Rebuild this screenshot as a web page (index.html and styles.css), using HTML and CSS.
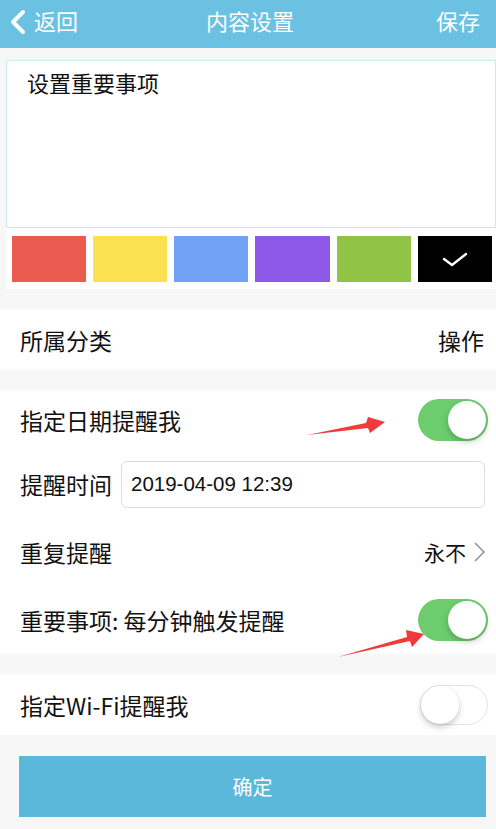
FILE: index.html
```html
<!DOCTYPE html>
<html lang="zh-CN">
<head>
  <meta charset="UTF-8" />
  <title>内容设置</title>
  <link rel="stylesheet" href="styles.css">
</head>
<body>
  <header class="topbar">
    <div class="back">
      <svg class="back-icon" width="20" height="26" viewBox="0 0 20 26">
        <path d="M15 3 L5 13 L15 23" fill="none" stroke="#fff" stroke-width="4" stroke-linecap="round" stroke-linejoin="round" />
      </svg>
      <span>返回</span>
    </div>
    <div class="title">内容设置</div>
    <div class="save">保存</div>
  </header>

  <div class="editor">
    <div class="note">设置重要事项</div>
    <div class="swatches">
      <div class="swatch red"></div>
      <div class="swatch yellow"></div>
      <div class="swatch blue"></div>
      <div class="swatch purple"></div>
      <div class="swatch green"></div>
      <div class="swatch black">
        <svg width="28" height="20" viewBox="0 0 28 20">
          <path d="M3 10 L11 16 L25 5" fill="none" stroke="#fff" stroke-width="2.4" stroke-linecap="round" stroke-linejoin="round" />
        </svg>
      </div>
    </div>
  </div>

  <!-- 分类 -->
  <div class="group">
    <div class="row">
      <span>所属分类</span>
      <span class="value">操作</span>
    </div>
  </div>

  <!-- 日期提醒 -->
  <div class="group">
    <div class="row first">
      <span>指定日期提醒我</span>
      <div class="toggle on"><div class="knob"></div></div>
    </div>
    <div class="row tall">
      <span>提醒时间</span>
      <div class="time-box">2019-04-09 12:39</div>
    </div>
    <div class="row tall">
      <span>重复提醒</span>
      <span class="value small">永不
        <svg class="chev" width="14" height="22" viewBox="0 0 14 22">
          <path d="M3 2 L12 11 L3 20" fill="none" stroke="#888" stroke-width="1.4" />
        </svg>
      </span>
    </div>
    <div class="row tall">
      <span>重要事项: 每分钟触发提醒</span>
      <div class="toggle on"><div class="knob"></div></div>
    </div>
  </div>

  <!-- Wi-Fi提醒 -->
  <div class="group">
    <div class="row">
      <span>指定Wi-Fi提醒我</span>
      <div class="toggle"><div class="knob"></div></div>
    </div>
  </div>

  <button class="confirm">确定</button>

  <svg class="marks" width="496" height="829" viewBox="0 0 496 829">
    <polygon points="307,435 366,423 368,417 385,422 370,433 368,428" fill="#f23a3a" />
    <polygon points="338,657 407,637 406,630 424,634 412,647 410,641" fill="#f23a3a" />
  </svg>
</body>
</html>
```

FILE: styles.css
```css
body {
  margin: 0;
  width: 496px;
  min-height: 829px;
  background: #f7f7f7;
  font-family: "Noto Sans CJK SC", "Noto Sans", sans-serif;
  color: #111;
  position: relative;
  overflow: hidden;
}

.topbar {
  height: 48px;
  box-sizing: border-box;
  background: #6bc1e1;
  color: #fff;
  font-size: 22px;
  display: grid;
  grid-template-columns: 1fr auto 1fr;
  align-items: center;
  padding: 0 16px 9px 8px;
}

.back {
  display: flex;
  align-items: center;
  gap: 6px;
}

.back-icon {
  position: relative;
  top: 2px;
}

.title {
  text-align: center;
  padding-left: 12px;
}

.save {
  text-align: right;
}

.editor {
  margin: 12px 0 20px 6px;
  background: #fff;
}

.note {
  height: 161px;
  border: 1px solid #cbe7f1;
  padding: 5px 20px 0;
  font-size: 22px;
}

.swatches {
  display: grid;
  grid-template-columns: repeat(6, 1fr);
  gap: 7px;
  padding: 8px 4px 7px 6px;
}

.swatch {
  height: 46px;
  display: flex;
  align-items: center;
  justify-content: center;
}

.red { background: #ec5b50; }
.yellow { background: #fbe04f; }
.blue { background: #72a2f5; }
.purple { background: #8e58e8; }
.green { background: #90c346; }
.black { background: #000; }

.group {
  background: #fff;
  margin-bottom: 20px;
}

.row {
  height: 61px;
  display: flex;
  align-items: center;
  justify-content: space-between;
  padding: 0 12px 0 20px;
  font-size: 23px;
}

.row.first {
  height: 60px;
  padding-right: 8px;
}

.row.tall {
  height: 68px;
}

.value {
  display: flex;
  align-items: center;
  gap: 2px;
}

.value.small {
  font-size: 21px;
  margin-right: -2px;
}

.chev {
  margin-left: 4px;
}

.time-box {
  flex: 1;
  margin-left: 9px;
  margin-right: -1px;
  height: 45px;
  border: 1px solid #dcdcdc;
  border-radius: 6px;
  display: flex;
  align-items: center;
  padding-left: 9px;
  font-family: "Liberation Sans", Arial, sans-serif;
  font-size: 20.5px;
  color: #111;
}

.toggle {
  width: 68px;
  height: 40px;
  border-radius: 21px;
  background: #fff;
  border: 1px solid #e3e3e3;
  position: relative;
  box-sizing: border-box;
}

.toggle .knob {
  position: absolute;
  top: 0;
  left: 0;
  width: 38px;
  height: 38px;
  border-radius: 50%;
  background: #fff;
  box-shadow: 0 3px 6px rgba(0, 0, 0, 0.22);
}

.toggle.on {
  width: 70px;
  height: 42px;
  background: #6dcc6e;
  border: none;
}

.toggle.on .knob {
  top: 2px;
  left: 30px;
}

.row .toggle {
  margin-right: -4px;
}

.row.first .toggle {
  margin-right: 0;
}

.confirm {
  display: block;
  margin: 0 10px 0 19px;
  width: 467px;
  height: 61px;
  border: none;
  background: #5bb8da;
  color: #fff;
  font-family: "Noto Sans CJK SC", sans-serif;
  font-size: 20px;
  position: relative;
  top: 1px;
}

.marks {
  position: absolute;
  top: 0;
  left: 0;
  pointer-events: none;
}
```
